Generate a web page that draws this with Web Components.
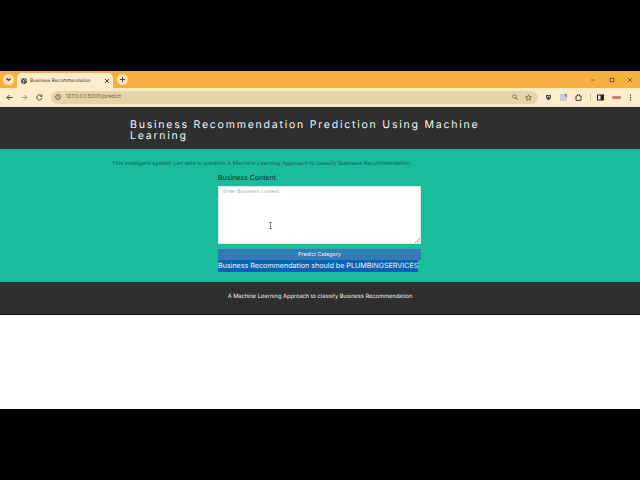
<!DOCTYPE html>
<html>
<head>
<meta charset="utf-8">
<title>Business Recommendation</title>
<style>
html, body { margin: 0; height: 100%; background: #000; overflow: hidden; }
body { font-family: Inter, "Liberation Sans", sans-serif; text-rendering: geometricPrecision; }
</style>
</head>
<body>
<video-frame>
  <browser-chrome></browser-chrome>
  <site-header>Business Recommendation Prediction Using Machine Learning</site-header>
  <predict-section></predict-section>
  <site-footer>A Machine Learning Approach to classify Business Recommendation</site-footer>
</video-frame>
<script>
class VideoFrame extends HTMLElement {
    constructor() {
        super()
        this.attachShadow({ mode: "open" }).innerHTML = `<style>
        :host { display: block; width: 640px; height: 480px; background: #000; padding: 71px 0; box-sizing: border-box; }
        .page { height: 338px; background: #fff; display: flex; flex-direction: column; }
        </style>
        <div class="page"><slot></slot></div>`
    }
}
customElements.define('video-frame', VideoFrame)

class BrowserChrome extends HTMLElement {
    constructor() {
        super()
        this.attachShadow({ mode: "open" }).innerHTML = `<style>
        :host { display: block; height: 36px; font-family: Inter, "Liberation Sans", sans-serif; color: #4a3a20; }
        svg { display: block; flex: none; }
        .tabs { height: 17px; background: #f6b042; display: flex; align-items: flex-end; padding-left: 3px; }
        .round { width: 11px; height: 11px; border-radius: 50%; background: #fde3b4; display: flex; align-items: center; justify-content: center; margin-bottom: 3px; flex: none; }
        .tab { width: 96px; height: 15px; margin-left: 3px; background: #fdeccb; border-radius: 5px 5px 0 0; display: flex; align-items: center; padding: 0 3px 0 4px; box-sizing: border-box; gap: 3px; font-size: 4.75px; color: #3c3325; }
        .tab span { flex: 1; white-space: nowrap; }
        .plus { margin-left: 4px; }
        .win { margin-left: auto; display: flex; align-self: center; gap: 12.5px; padding-right: 7px; }
        .bar { height: 19px; background: #fdeccb; display: flex; align-items: center; padding: 0 5px; box-sizing: border-box; border-bottom: 1px solid #f3e2bf; }
        .nav { display: flex; gap: 8px; margin-left: 1px; }
        .omni { width: 487px; height: 13px; margin-left: 7.5px; background: #e8d2a8; border-radius: 7px; display: flex; align-items: center; padding: 0 6px 0 4px; box-sizing: border-box; font-size: 5.4px; color: #6a5c42; }
        .omni span { margin-left: 5px; flex: 1; }
        .omni svg + svg { margin-left: 7px; }
        .tools { display: flex; align-items: center; gap: 8px; margin-left: 7.5px; }
        .sep { width: 1px; height: 8px; background: #d8c49c; }
        .panel { margin-left: -2px; }
        .pill { width: 9px; height: 3px; border-radius: 2px; background: #c27f75; }
        </style>
        <div class="tabs">
          <div class="round"><svg width="7" height="7" viewBox="0 0 7 7"><path d="M1.5 2.5 3.5 4.5 5.5 2.5" fill="none" stroke="#333" stroke-width="1.2"/></svg></div>
          <div class="tab">
            <svg width="6" height="6" viewBox="0 0 6 6"><circle cx="3" cy="3" r="3" fill="#4d4a44"/><path d="M1 1.5 3 3 2.4 5.4M3.4.4 4 2l1.6.6" fill="none" stroke="#fdeccb" stroke-width=".7"/></svg>
            <span>Business Recommendation</span>
            <svg width="6" height="6" viewBox="0 0 6 6"><path d="M1 1 5 5M5 1 1 5" stroke="#444" stroke-width="1"/></svg>
          </div>
          <div class="round plus"><svg width="7" height="7" viewBox="0 0 7 7"><path d="M3.5 1V6M1 3.5H6" stroke="#444" stroke-width="1"/></svg></div>
          <div class="win">
            <svg width="6" height="6" viewBox="0 0 6 6"><path d="M1 3H5" stroke="#7a5a20" stroke-width=".8"/></svg>
            <svg width="6" height="6" viewBox="0 0 6 6"><rect x="1.2" y="1.2" width="3.6" height="3.6" fill="none" stroke="#6a4c18" stroke-width=".9"/></svg>
            <svg width="6" height="6" viewBox="0 0 6 6"><path d="M1 1 5 5M5 1 1 5" stroke="#6a4c18" stroke-width=".8"/></svg>
          </div>
        </div>
        <div class="bar">
          <div class="nav">
            <svg width="7" height="7" viewBox="0 0 7 7"><path d="M6.5 3.5H1M3.5 1 1 3.5 3.5 6" fill="none" stroke="#4a4238" stroke-width="1"/></svg>
            <svg width="7" height="7" viewBox="0 0 7 7"><path d="M.5 3.5H6M3.5 1 6 3.5 3.5 6" fill="none" stroke="#a89c84" stroke-width="1"/></svg>
            <svg width="7" height="7" viewBox="0 0 7 7"><path d="M5.6 2A2.6 2.6 0 1 0 6 4M6 .8V2.4H4.4" fill="none" stroke="#4a4238" stroke-width="1"/></svg>
          </div>
          <div class="omni">
            <svg width="6" height="6" viewBox="0 0 6 6"><circle cx="3" cy="3" r="2.4" fill="none" stroke="#4a4238" stroke-width=".8"/><path d="M3 1.8V3.4" stroke="#4a4238" stroke-width=".8"/></svg>
            <span>127.0.0.1:5000/predict</span>
            <svg width="6" height="6" viewBox="0 0 6 6"><circle cx="2.5" cy="2.5" r="1.8" fill="none" stroke="#5c5240" stroke-width=".7"/><path d="M3.8 3.8 5.6 5.6" stroke="#5c5240" stroke-width=".8"/></svg>
            <svg width="7" height="7" viewBox="0 0 7 7"><path d="M3.5.7 4.3 2.7 6.4 2.8 4.8 4.2 5.3 6.3 3.5 5.2 1.7 6.3 2.2 4.2.6 2.8 2.7 2.7Z" fill="none" stroke="#5c5240" stroke-width=".7"/></svg>
          </div>
          <div class="tools">
            <svg width="7" height="7" viewBox="0 0 7 7"><path d="M1 1H6V4L3.5 6.5 1 4Z" fill="#4a4a48"/><circle cx="2.5" cy="2.7" r=".7" fill="#fdeccb"/><circle cx="4.5" cy="2.7" r=".7" fill="#fdeccb"/></svg>
            <svg width="7" height="7" viewBox="0 0 7 7"><rect width="7" height="7" fill="#c8cdd6"/><path d="M4 0H7V4Z" fill="#7d8798"/></svg>
            <svg width="7" height="7" viewBox="0 0 7 7"><path d="M1 2H2.5V.8H4.5V2H6V6.4H1Z" fill="none" stroke="#2f2a22" stroke-width=".9"/></svg>
            <div class="sep"></div>
            <svg class="panel" width="7" height="7" viewBox="0 0 7 7"><rect x=".5" y="1" width="6" height="5" fill="none" stroke="#222" stroke-width="1"/><rect x="3.5" y="1" width="3" height="5" fill="#222"/></svg>
            <div class="pill"></div>
            <svg width="3" height="7" viewBox="0 0 3 7"><circle cx="1.5" cy="1" r=".7" fill="#333"/><circle cx="1.5" cy="3.5" r=".7" fill="#333"/><circle cx="1.5" cy="6" r=".7" fill="#333"/></svg>
          </div>
        </div>`
    }
}
customElements.define('browser-chrome', BrowserChrome)

class SiteHeader extends HTMLElement {
    constructor() {
        super()
        this.attachShadow({ mode: "open" }).innerHTML = `<style>
        :host { display: block; height: 42px; background: #2f2f2f; color: #f4f4f4; box-sizing: border-box; padding: 12px 150px 0 130px; font-family: Inter, "Liberation Sans", sans-serif; font-size: 10.5px; line-height: 11px; letter-spacing: 1.78px; }
        </style><slot></slot>`
    }
}
customElements.define('site-header', SiteHeader)

class PredictSection extends HTMLElement {
    constructor() {
        super()
        this.attachShadow({ mode: "open" }).innerHTML = `<style>
        :host { display: block; height: 133px; background: #1abc9c; box-sizing: border-box; padding: 11px 0 0 112px; font-family: Inter, "Liberation Sans", sans-serif; }
        p { margin: 0; font-size: 5.65px; line-height: 8px; color: #155c50; white-space: nowrap; }
        .form { width: 203px; margin: 5px 0 0 106px; display: flex; flex-direction: column; }
        label { font-size: 7px; line-height: 9px; color: #0b2b26; }
        .box { position: relative; margin-top: 4px; height: 58px; background: #fff; border: 1px solid #dfe8e6; box-sizing: border-box; padding: 2px 4px; font-size: 5.2px; line-height: 7px; color: #a8a8a8; }
        .caret { position: absolute; left: 49px; top: 35px; }
        .grip { position: absolute; right: 0; bottom: 0; }
        button { display: block; margin-top: 5px; height: 11px; padding: 0; border: 0; background: #337ab7; color: #eef4fa; font: inherit; font-size: 5.4px; line-height: 11px; text-align: center; }
        .result { height: 12px; background: #0b62b0; color: #eef6ff; font-size: 7.15px; line-height: 12px; white-space: nowrap; width: 200px; }
        </style>
        <p>This intelligent system can able to predicts A Machine Learning Approach to classify Business Recommendation.</p>
        <div class="form">
          <label>Business Content.</label>
          <div class="box">Enter Business content
            <svg class="caret" width="5" height="7" viewBox="0 0 5 7"><path d="M1 .5H4M1 6.5H4M2.5 .5V6.5" stroke="#555" stroke-width=".7" fill="none"/></svg>
            <svg class="grip" width="5" height="5" viewBox="0 0 5 5"><path d="M0 5 5 0M2.5 5 5 2.5" stroke="#666" stroke-width=".6"/></svg>
          </div>
          <button>Predict Category</button>
          <div class="result">Business Recommendation should be PLUMBINGSERVICES</div>
        </div>`
    }
}
customElements.define('predict-section', PredictSection)

class SiteFooter extends HTMLElement {
    constructor() {
        super()
        this.attachShadow({ mode: "open" }).innerHTML = `<style>
        :host { display: block; height: 33px; background: #2f2f2f; border-bottom: 1px solid #111; box-sizing: border-box; color: #f2f2f2; text-align: center; font-family: Inter, "Liberation Sans", sans-serif; font-size: 5.7px; line-height: 29px; }
        </style><slot></slot>`
    }
}
customElements.define('site-footer', SiteFooter)
</script>
</body>
</html>
